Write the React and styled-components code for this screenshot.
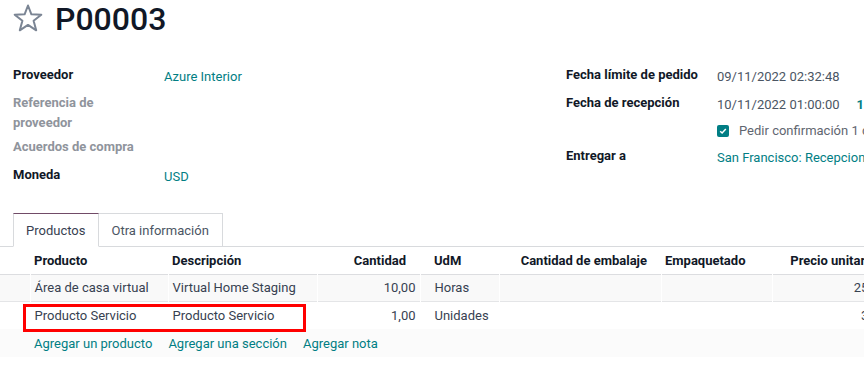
import styled, { createGlobalStyle } from 'styled-components';

const GlobalStyle = createGlobalStyle`
  html, body {
    margin: 0;
    padding: 0;
    background: #fff;
    overflow: hidden;
  }
  body {
    font-family: Roboto, "Liberation Sans", sans-serif;
    font-size: 13px;
    line-height: 1.5;
    color: #374151;
  }
`;

const Page = styled.div`
  width: 1000px;
`;

const Sheet = styled.div`
  padding: 0 13px;
`;

const TitleRow = styled.div`
  display: flex;
  align-items: flex-start;
  gap: 12px;
`;

const StarButton = styled.span`
  display: flex;
  padding-top: 4px;
`;

const Title = styled.h1`
  margin: 0;
  font-size: 32px;
  line-height: 1.2;
  font-weight: 500;
  color: #111827;
`;

const Groups = styled.div`
  display: grid;
  grid-template-columns: 553px 1fr;
  margin-top: 23px;
`;

const Group = styled.div`
  display: flex;
  flex-direction: column;
`;

const Row = styled.div`
  display: grid;
  grid-template-columns: 151px 1fr;
  box-sizing: border-box;
  min-height: ${(p) => p.$h || 28}px;
  padding: 4px 0 1px;
`;

const Label = styled.div`
  font-weight: 700;
  color: ${(p) => (p.$muted ? '#8f949c' : '#111827')};
  white-space: nowrap;
`;

const Value = styled.div`
  display: flex;
  align-items: center;
  white-space: nowrap;
  color: #4b5563;
`;

const Link = styled.span`
  color: #017e84;
`;

const Badge = styled.span`
  margin-left: 17px;
  font-weight: 700;
  color: #017e84;
`;

const Check = styled.span`
  display: inline-flex;
  align-items: center;
  justify-content: center;
  width: 12px;
  height: 12px;
  border-radius: 2px;
  background: #017e84;
  margin-right: 10px;
`;

const CheckText = styled.span`
  color: #5f6670;
`;

const Notebook = styled.div`
  margin-top: 24px;
`;

const TabNav = styled.div`
  display: flex;
  padding-left: 13px;
  border-bottom: 1px solid #d8dadd;
`;

const Tab = styled.div`
  box-sizing: border-box;
  height: 34px;
  padding: 0 13px 0 12px;
  display: flex;
  align-items: center;
  margin-bottom: -1px;
  border: 1px solid #d8dadd;
  border-left: ${(p) => (p.$active ? '1px solid #d8dadd' : 'none')};
  border-top-color: ${(p) => (p.$active ? '#714b67' : '#d8dadd')};
  border-bottom-color: ${(p) => (p.$active ? '#fff' : '#d8dadd')};
  background: #fff;
  color: ${(p) => (p.$active ? '#374151' : '#4b5563')};
`;

const TableWrap = styled.div`
  position: relative;
`;

const Table = styled.table`
  width: 890px;
  table-layout: fixed;
  border-collapse: collapse;
`;

const HeadRow = styled.tr`
  height: 27px;
  border-bottom: 1px solid #dcdde0;
  box-shadow: 0 1px 1px rgba(0, 0, 0, 0.04);
`;

const Th = styled.th`
  padding: ${(p) => (p.$right ? '0 14px 0 4px' : `0 4px 0 ${p.$pl || 4}px`)};
  text-align: ${(p) => (p.$right ? 'right' : 'left')};
  font-weight: 700;
  color: #111827;
  white-space: nowrap;
  overflow: hidden;
`;

const BodyRow = styled.tr`
  height: ${(p) => p.$h || 28}px;
  background: ${(p) => p.$bg || '#fff'};
  border-bottom: ${(p) => (p.$line ? '1px solid #e4e5e7' : 'none')};
`;

const Td = styled.td`
  padding: ${(p) => (p.$right ? '0 4px' : `0 4px 0 ${p.$pl || 4}px`)};
  text-align: ${(p) => (p.$right ? 'right' : 'left')};
  border-right: 1px solid #fff;
  white-space: nowrap;
  overflow: hidden;
  color: #374151;
`;

const AddCell = styled.td`
  padding: 0 4px;
  white-space: nowrap;
`;

const AddLinks = styled.div`
  display: flex;
  gap: 16px;
  color: #017e84;
`;

const Highlight = styled.div`
  position: absolute;
  left: 23px;
  top: 57px;
  width: 283px;
  height: 28px;
  box-sizing: border-box;
  border: 3px solid #f00;
  pointer-events: none;
`;

const StarIcon = () => (
  <svg width="30" height="28" viewBox="0 0 30 28">
    <polygon
      points="15,1.5 18.4,10.3 28.3,10.7 20.6,16.8 23.2,26.3 15,20.9 6.8,26.3 9.4,16.8 1.7,10.7 11.6,10.3"
      fill="none"
      stroke="#7b8594"
      strokeWidth="2"
      strokeLinejoin="round"
    />
  </svg>
);

const CheckMark = () => (
  <svg width="8" height="8" viewBox="0 0 8 8">
    <path d="M1.2 4.2 L3.1 6 L6.8 2" fill="none" stroke="#fff" strokeWidth="1.5" />
  </svg>
);

const cols = [30, 138, 149, 103, 79, 162, 111, 118];

const App = () => (
  <Page>
    <GlobalStyle />
    <Sheet>
      <TitleRow>
        <StarButton>
          <StarIcon />
        </StarButton>
        <Title>P00003</Title>
      </TitleRow>

      <Groups>
        <Group>
          <Row>
            <Label>Proveedor</Label>
            <Value><Link>Azure Interior</Link></Value>
          </Row>
          <Row>
            <Label $muted>Referencia de<br />proveedor</Label>
            <Value />
          </Row>
          <Row>
            <Label $muted>Acuerdos de compra</Label>
            <Value />
          </Row>
          <Row>
            <Label>Moneda</Label>
            <Value><Link>USD</Link></Value>
          </Row>
        </Group>
        <Group>
          <Row>
            <Label>Fecha límite de pedido</Label>
            <Value>09/11/2022 02:32:48</Value>
          </Row>
          <Row>
            <Label>Fecha de recepción</Label>
            <Value>10/11/2022 01:00:00<Badge>10 días</Badge></Value>
          </Row>
          <Row $h={24}>
            <div />
            <Value>
              <Check><CheckMark /></Check>
              <CheckText>Pedir confirmación 1 días antes</CheckText>
            </Value>
          </Row>
          <Row>
            <Label>Entregar a</Label>
            <Value><Link>San Francisco: Recepciones</Link></Value>
          </Row>
        </Group>
      </Groups>
    </Sheet>

    <Notebook>
      <TabNav>
        <Tab $active>Productos</Tab>
        <Tab>Otra información</Tab>
      </TabNav>
      <TableWrap>
        <Table>
          <colgroup>
            {cols.map((w, i) => (
              <col key={i} style={{ width: w }} />
            ))}
          </colgroup>
          <thead>
            <HeadRow>
              <Th />
              <Th>Producto</Th>
              <Th>Descripción</Th>
              <Th $right>Cantidad</Th>
              <Th $pl={14}>UdM</Th>
              <Th $right>Cantidad de embalaje</Th>
              <Th>Empaquetado</Th>
              <Th $right>Precio unitario</Th>
            </HeadRow>
          </thead>
          <tbody>
            <BodyRow $bg="#f9f9f9" $h={27} $line>
              <Td />
              <Td>Área de casa virtual</Td>
              <Td>Virtual Home Staging</Td>
              <Td $right>10,00</Td>
              <Td $pl={14}>Horas</Td>
              <Td />
              <Td />
              <Td $right>25,00</Td>
            </BodyRow>
            <BodyRow>
              <Td />
              <Td>Producto Servicio</Td>
              <Td>Producto Servicio</Td>
              <Td $right>1,00</Td>
              <Td $pl={14}>Unidades</Td>
              <Td />
              <Td />
              <Td $right>3,00</Td>
            </BodyRow>
            <BodyRow $bg="#fbfbfb">
              <AddCell />
              <AddCell colSpan={7}>
                <AddLinks>
                  <span>Agregar un producto</span>
                  <span>Agregar una sección</span>
                  <span>Agregar nota</span>
                </AddLinks>
              </AddCell>
            </BodyRow>
          </tbody>
        </Table>
        <Highlight />
      </TableWrap>
    </Notebook>
  </Page>
);

export default App;
